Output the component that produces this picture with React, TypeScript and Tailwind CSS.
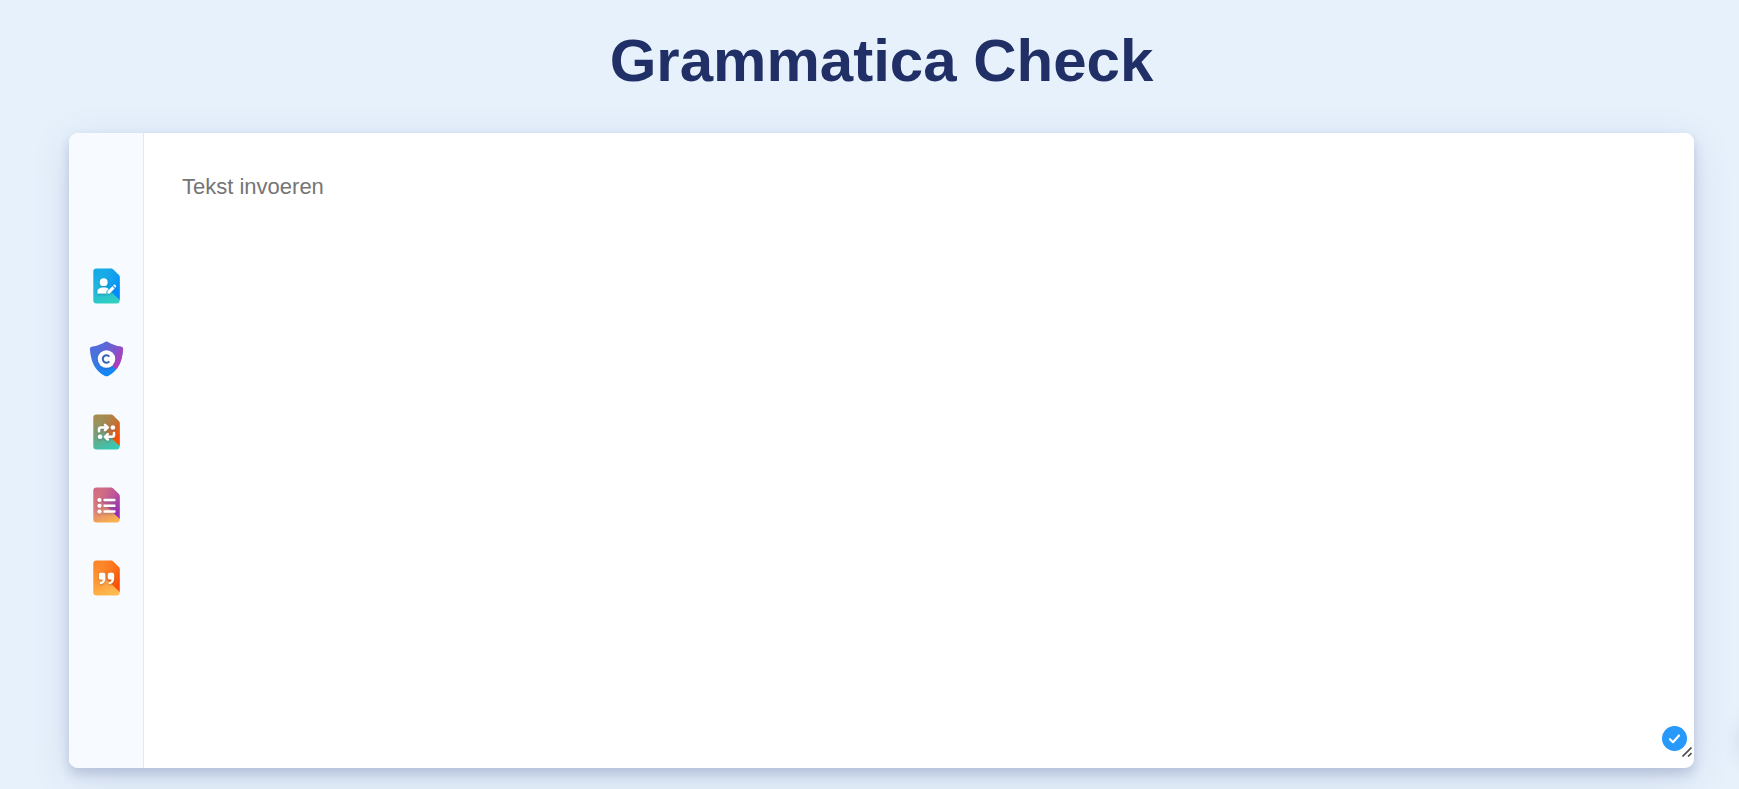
import React, { useState } from 'react';

const DOC = 'M8.5 0.5H23.2Q24.2 0.5 25 1.3L30.8 7Q31.7 7.9 31.7 9V32.3a3.2 3.2 0 0 1-3.2 3.2H8.5a3.2 3.2 0 0 1-3.2-3.2V3.7A3.2 3.2 0 0 1 8.5 0.5Z';
const SHIELD = 'M17.5 0.7Q18.500 0.1 19.500 0.7C23.500 3.2 28 4.800 32.500 5.600C34.700 6 35.200 7 35.100 8.600C34 21 30 30 20.500 34.800Q18.500 35.800 16.500 34.800C7 30 3 21 1.900 8.600C1.800 7 2.300 6 4.500 5.600C9 4.800 13.500 3.200 17.500 0.7Z';

interface ToolIconProps {
  id: string;
  shape: string;
  top: string;
  mid: string;
  bottom: string;
  fold: string;
  children: React.ReactNode;
}

const ToolIcon: React.FC<ToolIconProps> = ({ id, shape, top, mid, bottom, fold, children }) => (
  <svg viewBox="0 0 36 36" className="size-9" aria-hidden="true">
    <defs>
      <linearGradient id={`${id}-base`} x1="0.3" y1="0" x2="0.6" y2="1">
        <stop offset="0" stopColor={top} />
        <stop offset="0.5" stopColor={mid} />
        <stop offset="1" stopColor={bottom} />
      </linearGradient>
      <linearGradient id={`${id}-fold`} gradientUnits="userSpaceOnUse" x1="11" y1="8" x2="31" y2="22">
        <stop offset="0" stopColor={fold} stopOpacity="0" />
        <stop offset="0.5" stopColor={fold} stopOpacity="0.45" />
        <stop offset="1" stopColor={fold} />
      </linearGradient>
      <clipPath id={`${id}-clip`}>
        <path d={shape} />
      </clipPath>
      <filter id={`${id}-shadow`} x="-20%" y="-20%" width="150%" height="150%">
        <feDropShadow dx="0" dy="1" stdDeviation="1" floodColor="#202f66" floodOpacity="0.3" />
      </filter>
    </defs>
    <path d={shape} fill={`url(#${id}-base)`} />
    <path d="M5 0H36V36L17 18L5 6Z" fill={`url(#${id}-fold)`} clipPath={`url(#${id}-clip)`} />
    <g filter={`url(#${id}-shadow)`}>{children}</g>
  </svg>
);

const tools = [
  {
    id: 'rewriter',
    label: 'Herschrijven',
    shape: DOC,
    top: '#16a9e8',
    mid: '#20b8dc',
    bottom: '#30d0c0',
    fold: '#0089ff',
    glyph: (
      <g fill="#fff">
        <circle cx="15.7" cy="14.2" r="3.9" />
        <path d="M9.5 25.4V23.5C9.5 20.5 12.500 19.500 15.700 19.500C17.800 19.500 19.500 20 20.600 20.900L18.400 23.100V25.400Z" />
        <path d="M19.500 25.400V23.200L24.400 18.300L26.600 20.500L21.700 25.400ZM25.100 17.600L25.900 16.800Q26.500 16.300 27.100 16.800L28 17.800Q28.500 18.400 28 19L27.300 19.800Z" />
      </g>
    ),
  },
  {
    id: 'plagiarism',
    label: 'Plagiaatcontrole',
    shape: SHIELD,
    top: '#5c68d8',
    mid: '#3c79e2',
    bottom: '#078bfb',
    fold: '#b63bb8',
    glyph: (
      <>
        <circle cx="18.5" cy="18" r="8.7" fill="#fff" />
        <path d="M21.300 15.600A3.700 3.700 0 1 0 21.300 20.400" fill="none" stroke="#3a62b4" strokeWidth="2" />
      </>
    ),
  },
  {
    id: 'paraphraser',
    label: 'Parafraseren',
    shape: DOC,
    top: '#a98b4c',
    mid: '#75a07a',
    bottom: '#36c9b4',
    fold: '#ff4d00',
    glyph: (
      <g fill="none" stroke="#fff" strokeWidth="2.5" strokeLinecap="round" strokeLinejoin="round">
        <path d="M11 17.300V15.500Q11 13.500 13 13.500H19M17 10.800L19.800 13.500L17 16.200" />
        <path d="M26 19V20.800Q26 22.800 24 22.800H18M19.800 20.100L17 22.800L19.800 25.500" />
        <circle cx="24.900" cy="13.500" r="2.300" fill="#fff" stroke="none" />
        <circle cx="12.100" cy="22.800" r="2.300" fill="#fff" stroke="none" />
      </g>
    ),
  },
  {
    id: 'summarizer',
    label: 'Samenvatten',
    shape: DOC,
    top: '#d06a84',
    mid: '#dc7c7c',
    bottom: '#f9b04e',
    fold: '#9b30b6',
    glyph: (
      <g fill="#fff">
        <circle cx="11.500" cy="13" r="2.100" />
        <circle cx="11.500" cy="18.800" r="2.100" />
        <circle cx="11.500" cy="24.500" r="2.100" />
        <rect x="15.500" y="11.800" width="12" height="2.400" rx="0.8" />
        <rect x="15.500" y="17.600" width="12" height="2.400" rx="0.8" />
        <rect x="15.500" y="23.300" width="12" height="2.400" rx="0.8" />
      </g>
    ),
  },
  {
    id: 'citation',
    label: 'Citeren',
    shape: DOC,
    top: '#fc8428',
    mid: '#fd9836',
    bottom: '#ffbb50',
    fold: '#fb4f05',
    glyph: (
      <g fill="#fff">
        <path d="M11 14.500Q11 12.800 12.700 12.800H15.600Q17.300 12.800 17.300 14.500V18.500C17.300 22 15.500 23.600 12.800 23.900Q11.800 23.900 11.800 23Q11.800 22.200 12.700 22C14 21.700 14.800 20.900 14.900 19.400H12.700Q11 19.400 11 17.700Z" />
        <path d="M19.800 14.500Q19.800 12.800 21.500 12.800H24.400Q26.100 12.800 26.100 14.500V18.500C26.100 22 24.300 23.600 21.600 23.900Q20.600 23.900 20.600 23Q20.600 22.200 21.500 22C22.800 21.700 23.600 20.900 23.700 19.400H21.500Q19.800 19.400 19.800 17.700Z" />
      </g>
    ),
  },
];

export default function App() {
  const [text, setText] = useState('');

  return (
    <div className="min-h-screen overflow-hidden bg-[#e7f1fc] pt-6 pr-[45px] pb-5 pl-[69px] font-['Liberation_Sans',Arial,sans-serif]">
      <h1 className="text-center text-6xl leading-[73px] font-bold text-[#202f66]">Grammatica Check</h1>

      <main className="mt-9 flex min-h-[635px] overflow-hidden rounded-[9px] bg-white shadow-[0_6px_12px_rgba(42,60,120,0.2),0_10px_40px_rgba(42,60,120,0.12)]">
        {/* Tool sidebar */}
        <nav className="flex w-[75px] shrink-0 flex-col items-center justify-center gap-[37px] border-r border-[#dfe8f3] bg-[#f7fbff] pb-[37px]">
          {tools.map(tool => (
            <a key={tool.id} href={`#${tool.id}`} aria-label={tool.label}>
              <ToolIcon
                id={tool.id}
                shape={tool.shape}
                top={tool.top}
                mid={tool.mid}
                bottom={tool.bottom}
                fold={tool.fold}
              >
                {tool.glyph}
              </ToolIcon>
            </a>
          ))}
        </nav>

        {/* Editor */}
        <div className="relative flex min-w-0 flex-1 pb-2">
          <textarea
            aria-label="Tekst invoeren"
            placeholder="Tekst invoeren"
            value={text}
            onChange={e => setText(e.target.value)}
            className="min-h-full w-full resize-none bg-white px-[38px] pt-10 text-[22px] leading-7 text-gray-800 outline-none placeholder:text-[#757575]"
          />
          <button
            type="button"
            aria-label="Controleren"
            className="absolute right-[7px] bottom-[17px] flex size-[25px] items-center justify-center rounded-full bg-[#2699fb]"
          >
            <svg viewBox="0 0 25 25" className="size-full" fill="none" stroke="#fff" strokeWidth="2.2" aria-hidden="true">
              <path d="M8 13.200L11 16.200L17 9.500" strokeLinecap="round" strokeLinejoin="round" />
            </svg>
          </button>
          {/* Resize grip */}
          <svg
            viewBox="0 0 10 10"
            className="absolute right-0.5 bottom-[11px] size-2.5"
            fill="none"
            stroke="#4d4d4d"
            strokeWidth="1.6"
            aria-hidden="true"
          >
            <path d="M0.500 9.500L9.500 0.500M6 9.500L9.500 6" />
          </svg>
        </div>
      </main>

      {/* Collapsed side widget, only its shadow reaches the viewport */}
      <div className="fixed -right-12 bottom-6 size-12 rounded-full shadow-[0_0_20px_rgba(32,47,102,0.12)]" />
    </div>
  );
}
